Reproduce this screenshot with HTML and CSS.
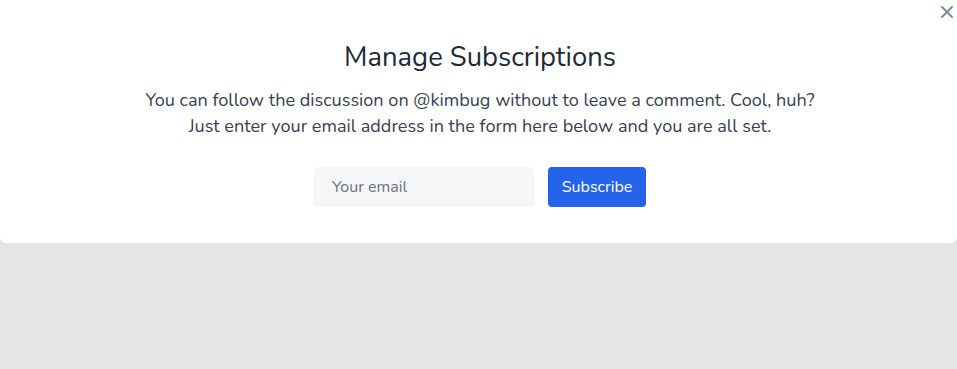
FILE: index.html
```html
<!DOCTYPE html>
<html lang="en">
<head>
<meta charset="UTF-8">
<meta name="viewport" content="width=device-width, initial-scale=1.0">
<title>Manage Subscriptions</title>
<link rel="stylesheet" href="styles.css">
</head>
<body>
<div class="modal">
  <button class="close" aria-label="Close">
    <svg width="12" height="12" viewBox="0 0 12 12"><path d="M1 1L11 11M11 1L1 11" stroke="currentColor" stroke-width="1.8" stroke-linecap="round"/></svg>
  </button>
  <h1>Manage Subscriptions</h1>
  <p class="lead">You can follow the discussion on @kimbug without to leave a comment. Cool, huh?<br>
  Just enter your email address in the form here below and you are all set.</p>
  <form class="subscribe" onsubmit="return false">
    <input type="email" placeholder="Your email">
    <button type="submit">Subscribe</button>
  </form>
</div>
</body>
</html>
```

FILE: styles.css
```css
body {
  margin: 0;
  padding: 0;
  background-color: #e5e5e5;
  font-family: "Nunito", "Lato", "Open Sans", sans-serif;
  color: #1f2937;
}

.modal {
  position: relative;
  background-color: #fff;
  border-radius: 0 0 6px 6px;
  padding: 39px 18.5px 36px 21.5px;
  text-align: center;
}

.close {
  position: absolute;
  top: 2px;
  right: 0;
  border: 0;
  background: none;
  color: #7c8799;
  padding: 4px;
  cursor: pointer;
  line-height: 0;
}

h1 {
  margin: 0;
  font-size: 27.4px;
  font-weight: 400;
  line-height: 36px;
}

.lead {
  margin: 12px 0 0;
  font-size: 18.1px;
  line-height: 26px;
  color: #374151;
}

.subscribe {
  display: flex;
  justify-content: center;
  gap: 14px;
  margin-top: 28px;
}

.subscribe input {
  width: 220px;
  height: 40px;
  box-sizing: border-box;
  border: 0;
  border-radius: 4px;
  background-color: #f5f6f8;
  padding: 0 18px;
  font-family: inherit;
  font-size: 16px;
  color: #374151;
}

.subscribe input::placeholder {
  color: #6b7280;
}

.subscribe button {
  width: 98px;
  height: 40px;
  border: 0;
  border-radius: 4px;
  background-color: #2563eb;
  color: #fff;
  font-family: inherit;
  font-size: 16px;
}
```
